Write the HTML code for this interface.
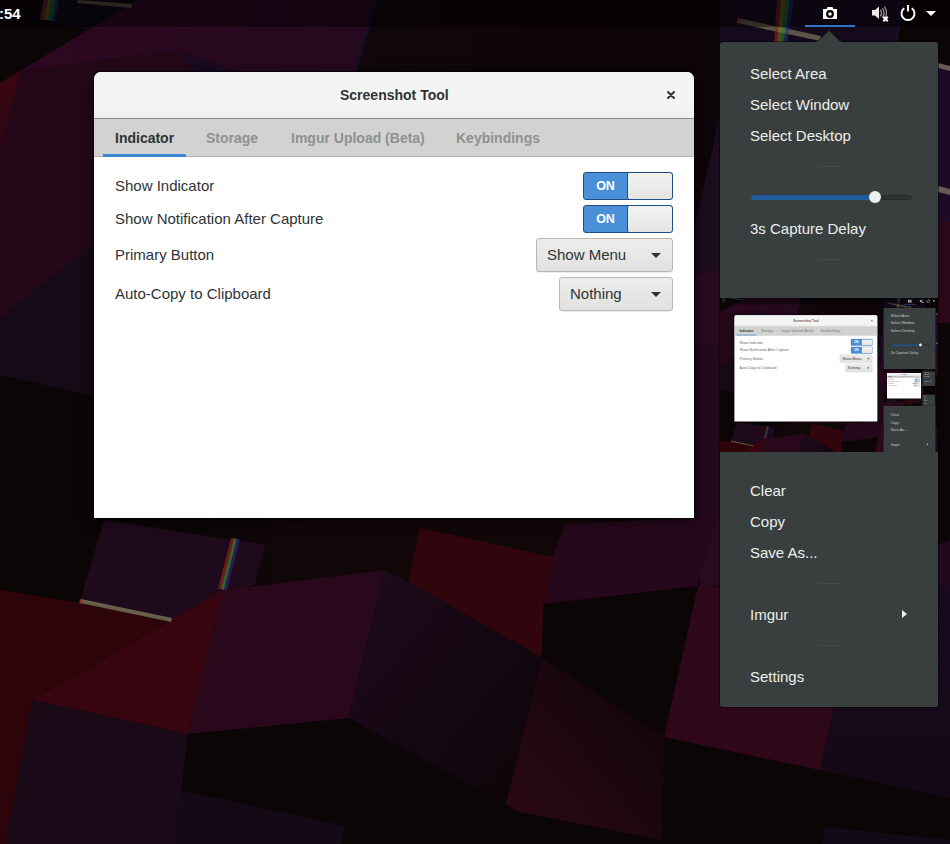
<!DOCTYPE html>
<html><head><meta charset="utf-8"><style>
*{box-sizing:border-box;margin:0;padding:0}
html,body{width:950px;height:844px;overflow:hidden;background:#0b0506}
body{position:relative;font-family:"Liberation Sans",sans-serif}
.scene{position:absolute;left:0;top:0;width:950px;height:844px;overflow:hidden}
.abs{position:absolute}
.t{position:absolute;white-space:nowrap;line-height:1}
.bgsvg{position:absolute;left:0;top:0}
.topbar{position:absolute;left:0;top:0;width:950px;height:27px;background:rgba(0,0,0,.45)}
.dlg{position:absolute;left:94px;top:72px;width:600px;height:446px;background:#fff;border-radius:7px 7px 0 0;overflow:hidden;box-shadow:0 0 0 1px rgba(0,0,0,.55),0 2px 14px rgba(0,0,0,.6)}
.hdr{position:absolute;left:0;top:0;width:600px;height:47px;background:linear-gradient(#f4f4f4 80%,#eeeeed);border-bottom:1px solid #8f8f8b}
.tabs{position:absolute;left:0;top:47px;width:600px;height:38px;background:#d2d2d0;border-bottom:1px solid #b0b0ac}
.tab{position:absolute;top:11px;font-size:14px;font-weight:bold;color:#8f9191}
.lbl{position:absolute;font-size:15px;color:#2e3436}
.sw{position:absolute;width:90px;height:28px;border:1px solid #1c4f88;border-radius:3px;background:#4a90d9;overflow:hidden}
.sw .on{position:absolute;left:0;top:0;width:43px;height:26px;color:#fff;font-size:12.5px;font-weight:bold;text-align:center;line-height:27px}
.sw .knob{position:absolute;left:43px;top:0;width:45px;height:26px;background:linear-gradient(#f3f3f2,#e4e4e3);border-left:1px solid #1c4f88;border-radius:2px}
.cb{position:absolute;height:34px;border:1px solid #b6b6b3;border-radius:3px;background:linear-gradient(#ededec,#e1e1df);box-shadow:0 1px rgba(0,0,0,.07)}
.cb .tx{position:absolute;left:10px;top:7px;font-size:15px;color:#2e3436}
.cb .ar{position:absolute;right:11px;top:14px;width:0;height:0;border-left:5px solid transparent;border-right:5px solid transparent;border-top:5px solid #2e3436}
.menu{position:absolute;left:720px;top:42px;width:218px;height:665px;background:#393f3f;border-radius:2.5px;box-shadow:0 0 0 1px rgba(0,0,0,.45)}
.marrow{position:absolute;left:816px;top:30px}
.mi{position:absolute;left:30px;font-size:15px;color:#eeeeec}
.sep{position:absolute;left:94px;width:34px;height:1px;background:linear-gradient(90deg,#393f3f,#434949 30%,#434949 70%,#393f3f)}
.thumb{position:absolute;left:720px;top:298px;width:218px;height:154px;overflow:hidden;background:#0b0506}
.thumb > .scene{transform-origin:0 0;transform:scale(0.2383);left:-8.4px;top:0}
.thumb .t{opacity:.75}
</style></head><body><div class="scene"><svg class="bgsvg" width="950" height="844" viewBox="0 0 950 844">
<defs>
<linearGradient id="gmid" x1="0" y1="0" x2="1" y2="1"><stop offset="0" stop-color="#1e0a1c"/><stop offset="1" stop-color="#0c0508"/></linearGradient>
<linearGradient id="gbig" x1="1" y1="0" x2="0" y2="1"><stop offset="0" stop-color="#0c0506"/><stop offset="1" stop-color="#2e0818"/></linearGradient>
<linearGradient id="gup" x1="0" y1="0" x2="1" y2="0"><stop offset="0" stop-color="#2e0720"/><stop offset="1" stop-color="#240a1e"/></linearGradient>
<linearGradient id="gred" x1="0" y1="0" x2="0" y2="1"><stop offset="0" stop-color="#3a0510"/><stop offset="1" stop-color="#260816"/></linearGradient>
<linearGradient id="gband" x1="0" y1="0" x2="1" y2="0"><stop offset="0" stop-color="#110709" stop-opacity="0"/><stop offset=".25" stop-color="#110709" stop-opacity="1"/></linearGradient>
<linearGradient id="grt" x1="0" y1="0" x2="0" y2="1"><stop offset="0" stop-color="#1a0a20"/><stop offset="1" stop-color="#140816"/></linearGradient>
<linearGradient id="gdk" x1="0" y1="0" x2="1" y2="0"><stop offset="0" stop-color="#10060c"/><stop offset=".7" stop-color="#0f0508"/><stop offset="1" stop-color="#0c050a"/></linearGradient>
</defs>
<rect width="950" height="844" fill="#0b0506"/>
<!-- top area -->
<polygon points="376,0 720,0 720,120 694,230 694,72 356,72" fill="url(#gdk)"/>
<polygon points="40,0 137,0 88,30 40,20" fill="#0d0a12"/>
<polygon points="138,0 376,0 356,72 237,72 182,50 20,71 0,83" fill="url(#gup)"/><line x1="376" y1="0" x2="356" y2="72" stroke="#0c1028" stroke-width="2"/>
<polygon points="20,71 182,50 237,72 94,72 94,242 23,300 0,318 0,162" fill="#240818"/>
<polygon points="0,83 20,71 0,162" fill="url(#gred)"/><polygon points="182,50 237,72 193,72" fill="#1c0a20"/>
<polygon points="0,318 94,242 94,396 0,375" fill="#170a17"/>
<!-- right top -->
<polygon points="720,0 904,0 896,42 720,42" fill="#140a1c"/><line x1="904" y1="0" x2="896" y2="42" stroke="#101a30" stroke-width="1.5"/>
<polygon points="719,119 720,42 720,270 695,275 695,225" fill="#1a0c1c"/>
<polygon points="695,275 720,270 720,586 697,586 695,518" fill="#2a0a1e"/>
<polygon points="695,344 720,344 720,518 695,518" fill="#22091a"/>
<polygon points="938,65 950,65 950,222 938,222" fill="#1e0a26"/>
<polygon points="938,222 950,222 950,323 938,323" fill="#2a0818"/>
<!-- bottom -->
<polygon points="200,518 700,518 700,600 200,600" fill="url(#gband)"/>
<polygon points="104,520 265,545 255,584 171,620 80,601" fill="#1e0a1a"/>
<polygon points="0,590 80,603 171,622 223,590 33,700 5,844 0,844" fill="#2c040a"/>
<polygon points="223,590 188,734 33,700" fill="#36050f"/>
<polygon points="223,590 384,570 349,718 188,734" fill="#29081b"/>
<polygon points="33,700 188,734 175,844 5,844" fill="#1a0a18"/>
<polygon points="180,790 345,826 341,844 175,844" fill="#140a16"/>
<polygon points="420,528 553,557 541,657 408,582" fill="#30050e"/>
<polygon points="565,524 694,518 720,512 697,586 545,604 553,557" fill="#25081b"/>
<polygon points="384,570 408,582 541,657 506,804 349,718" fill="url(#gmid)"/>
<polygon points="543,604 698,586 664,737 542,658" fill="#0c0506"/>
<polygon points="542,658 664,737 662,840 520,812 506,804" fill="url(#gbig)"/>
<polygon points="698,586 720,587 834,707 820,770 664,737" fill="#2e0818"/>
<polygon points="834,707 938,707 938,545 950,540 950,798 820,770" fill="url(#grt)"/><polygon points="938,545 950,540 950,585 938,585" fill="#22081c"/><polygon points="824,827 950,840 950,844 823,844" fill="#120a16"/>
<!-- prism beams -->
<polygon points="81,599 172,618 171,622 80,603" fill="#a09870" opacity=".6"/>
<polygon points="80,599 84,600 83,604 79,603" fill="#c03030" opacity=".5"/>
<polygon points="231,538 234,538 221,589 218,589" fill="#b02020" opacity=".6"/>
<polygon points="234,538 237,539 224,590 221,589" fill="#40a030" opacity=".6"/>
<polygon points="237,539 240,539 227,590 224,590" fill="#3030a0" opacity=".5"/>
<polygon points="44,0 48,0 44,20 40,19" fill="#902828" opacity=".6"/>
<polygon points="48,0 52,0 48,20 44,20" fill="#808020" opacity=".55"/>
<polygon points="52,0 56,0 52,21 48,20" fill="#208040" opacity=".55"/>
<polygon points="56,0 59,0 55,21 52,21" fill="#203080" opacity=".55"/>
<polygon points="78,0 132,4 131,8 77,3" fill="#8a8060" opacity=".5"/>
<polygon points="738,18 821,36 820,41 737,23" fill="#6e6850" opacity=".8"/><polygon points="738,18 742,19 741,24 737,23" fill="#902020" opacity=".6"/>
<polygon points="777,0 781,0 777,42 774,42" fill="#902020" opacity=".6"/>
<polygon points="781,0 786,0 781,42 777,42" fill="#808020" opacity=".55"/>
<polygon points="786,0 790,0 784,42 781,42" fill="#208a40" opacity=".55"/>
<polygon points="790,0 794,0 787,42 784,42" fill="#20308a" opacity=".55"/>
<polygon points="938,63 950,66 950,71 938,68" fill="#9a9078" opacity=".6"/>
<polygon points="938,186 950,189 950,195 938,192" fill="#9a9078" opacity=".6"/>
</svg>
<div class="topbar"></div><div class="t" style="left:-1px;top:6px;font-size:15px;font-weight:bold;color:#fff">:54</div><svg class="abs" style="left:820px;top:4px" width="20" height="18" viewBox="0 0 20 18"><path d="M3 6h3.5l1-2.5h5l1 2.5h3.5v10h-14z" fill="#000" opacity=".5"/><path d="M3 5h3.5l1-2h5l1 2h3.5v10h-14z" fill="#fff"/><circle cx="10" cy="10" r="3.9" fill="#000"/><circle cx="10" cy="10" r="1.8" fill="#fff"/></svg><div class="abs" style="left:805px;top:25px;width:50px;height:2px;background:#3474c4"></div><svg class="abs" style="left:870px;top:4px" width="20" height="18" viewBox="0 0 20 18"><path d="M2 6h3l4-3.5v12.5l-4-3.5h-3z" fill="#e8e8e8"/><path d="M10.5 5.5q2 3.5 0 7M12.5 4q3 5 0 10M14.5 2.5q4 6.5 0 13" stroke="#8a8a8a" stroke-width="1.4" fill="none"/><path d="M13.3 12.8l4.4 4.4M17.7 12.8l-4.4 4.4" stroke="#fff" stroke-width="2.2"/></svg><svg class="abs" style="left:899px;top:4px" width="18" height="18" viewBox="0 0 18 18"><path d="M5.27 4.18A6.5 6.5 0 1 0 12.73 4.18" stroke="#fff" stroke-width="1.9" fill="none"/><path d="M9 1v6.5" stroke="#fff" stroke-width="1.9"/></svg><div class="abs" style="left:926px;top:11px;width:0;height:0;border-left:5px solid transparent;border-right:5px solid transparent;border-top:5px solid #fff"></div><div class="dlg">
  <div class="hdr">
    <div class="t" style="left:246px;top:16px;font-size:14px;font-weight:bold;color:#2e3436">Screenshot Tool</div>
    <svg class="abs" style="left:572px;top:18px" width="10" height="10" viewBox="0 0 10 10"><path d="M2 2L8 8M8 2L2 8" stroke="#2e3436" stroke-width="2" stroke-linecap="round"/></svg>
  </div>
  <div class="tabs">
    <div class="tab" style="left:21px;color:#2e3436">Indicator</div>
    <div class="tab" style="left:112px">Storage</div>
    <div class="tab" style="left:197px">Imgur Upload (Beta)</div>
    <div class="tab" style="left:362px">Keybindings</div>
    <div class="abs" style="left:9px;top:35px;width:83px;height:3px;background:#3f88d8"></div>
  </div>
  <div class="lbl t" style="left:21px;top:106px">Show Indicator</div>
  <div class="lbl t" style="left:21px;top:139px">Show Notification After Capture</div>
  <div class="lbl t" style="left:21px;top:175px">Primary Button</div>
  <div class="lbl t" style="left:21px;top:214px">Auto-Copy to Clipboard</div>
  <div class="sw" style="left:489px;top:100px"><div class="on">ON</div><div class="knob"></div></div>
  <div class="sw" style="left:489px;top:133px"><div class="on">ON</div><div class="knob"></div></div>
  <div class="cb" style="left:442px;top:166px;width:137px"><div class="tx">Show Menu</div><div class="ar"></div></div>
  <div class="cb" style="left:465px;top:205px;width:114px"><div class="tx">Nothing</div><div class="ar"></div></div>
</div><div class="menu">
  <div class="mi t" style="top:24px">Select Area</div>
  <div class="mi t" style="top:55px">Select Window</div>
  <div class="mi t" style="top:86px">Select Desktop</div>
  <div class="sep" style="top:124px"></div>
  <div class="abs" style="left:31px;top:153px;width:161px;height:5px;border-radius:3px;background:#2e3232;border:1px solid #262a2a"></div>
  <div class="abs" style="left:31px;top:153px;width:125px;height:5px;border-radius:3px;background:#215d9c"></div>
  <div class="abs" style="left:149px;top:149px;width:12px;height:12px;border-radius:6px;background:#eeeeec"></div>
  <div class="mi t" style="top:179px">3s Capture Delay</div>
  <div class="sep" style="top:217px"></div>
  <div class="mi t" style="top:441px">Clear</div>
  <div class="mi t" style="top:472px">Copy</div>
  <div class="mi t" style="top:503px">Save As...</div>
  <div class="sep" style="top:541px"></div>
  <div class="mi t" style="top:565px">Imgur</div>
  <div class="abs" style="left:182px;top:568px;width:0;height:0;border-top:4.5px solid transparent;border-bottom:4.5px solid transparent;border-left:5px solid #eeeeec"></div>
  <div class="sep" style="top:603px"></div>
  <div class="mi t" style="top:627px">Settings</div>
</div><svg class="marrow" width="26" height="14" viewBox="0 0 26 14"><path d="M0.5 12.5L13 0.3L25.5 12.5" fill="#393f3f" stroke="rgba(0,0,0,.5)" stroke-width="1"/><rect x="0" y="11.5" width="26" height="3" fill="#393f3f"/></svg><div class="thumb"><div class="scene"><svg class="bgsvg" width="950" height="844" viewBox="0 0 950 844">
<defs>
<linearGradient id="gmid" x1="0" y1="0" x2="1" y2="1"><stop offset="0" stop-color="#1e0a1c"/><stop offset="1" stop-color="#0c0508"/></linearGradient>
<linearGradient id="gbig" x1="1" y1="0" x2="0" y2="1"><stop offset="0" stop-color="#0c0506"/><stop offset="1" stop-color="#2e0818"/></linearGradient>
<linearGradient id="gup" x1="0" y1="0" x2="1" y2="0"><stop offset="0" stop-color="#2e0720"/><stop offset="1" stop-color="#240a1e"/></linearGradient>
<linearGradient id="gred" x1="0" y1="0" x2="0" y2="1"><stop offset="0" stop-color="#3a0510"/><stop offset="1" stop-color="#260816"/></linearGradient>
<linearGradient id="gband" x1="0" y1="0" x2="1" y2="0"><stop offset="0" stop-color="#110709" stop-opacity="0"/><stop offset=".25" stop-color="#110709" stop-opacity="1"/></linearGradient>
<linearGradient id="grt" x1="0" y1="0" x2="0" y2="1"><stop offset="0" stop-color="#1a0a20"/><stop offset="1" stop-color="#140816"/></linearGradient>
<linearGradient id="gdk" x1="0" y1="0" x2="1" y2="0"><stop offset="0" stop-color="#10060c"/><stop offset=".7" stop-color="#0f0508"/><stop offset="1" stop-color="#0c050a"/></linearGradient>
</defs>
<rect width="950" height="844" fill="#0b0506"/>
<!-- top area -->
<polygon points="376,0 720,0 720,120 694,230 694,72 356,72" fill="url(#gdk)"/>
<polygon points="40,0 137,0 88,30 40,20" fill="#0d0a12"/>
<polygon points="138,0 376,0 356,72 237,72 182,50 20,71 0,83" fill="url(#gup)"/><line x1="376" y1="0" x2="356" y2="72" stroke="#0c1028" stroke-width="2"/>
<polygon points="20,71 182,50 237,72 94,72 94,242 23,300 0,318 0,162" fill="#240818"/>
<polygon points="0,83 20,71 0,162" fill="url(#gred)"/><polygon points="182,50 237,72 193,72" fill="#1c0a20"/>
<polygon points="0,318 94,242 94,396 0,375" fill="#170a17"/>
<!-- right top -->
<polygon points="720,0 904,0 896,42 720,42" fill="#140a1c"/><line x1="904" y1="0" x2="896" y2="42" stroke="#101a30" stroke-width="1.5"/>
<polygon points="719,119 720,42 720,270 695,275 695,225" fill="#1a0c1c"/>
<polygon points="695,275 720,270 720,586 697,586 695,518" fill="#2a0a1e"/>
<polygon points="695,344 720,344 720,518 695,518" fill="#22091a"/>
<polygon points="938,65 950,65 950,222 938,222" fill="#1e0a26"/>
<polygon points="938,222 950,222 950,323 938,323" fill="#2a0818"/>
<!-- bottom -->
<polygon points="200,518 700,518 700,600 200,600" fill="url(#gband)"/>
<polygon points="104,520 265,545 255,584 171,620 80,601" fill="#1e0a1a"/>
<polygon points="0,590 80,603 171,622 223,590 33,700 5,844 0,844" fill="#2c040a"/>
<polygon points="223,590 188,734 33,700" fill="#36050f"/>
<polygon points="223,590 384,570 349,718 188,734" fill="#29081b"/>
<polygon points="33,700 188,734 175,844 5,844" fill="#1a0a18"/>
<polygon points="180,790 345,826 341,844 175,844" fill="#140a16"/>
<polygon points="420,528 553,557 541,657 408,582" fill="#30050e"/>
<polygon points="565,524 694,518 720,512 697,586 545,604 553,557" fill="#25081b"/>
<polygon points="384,570 408,582 541,657 506,804 349,718" fill="url(#gmid)"/>
<polygon points="543,604 698,586 664,737 542,658" fill="#0c0506"/>
<polygon points="542,658 664,737 662,840 520,812 506,804" fill="url(#gbig)"/>
<polygon points="698,586 720,587 834,707 820,770 664,737" fill="#2e0818"/>
<polygon points="834,707 938,707 938,545 950,540 950,798 820,770" fill="url(#grt)"/><polygon points="938,545 950,540 950,585 938,585" fill="#22081c"/><polygon points="824,827 950,840 950,844 823,844" fill="#120a16"/>
<!-- prism beams -->
<polygon points="81,599 172,618 171,622 80,603" fill="#a09870" opacity=".6"/>
<polygon points="80,599 84,600 83,604 79,603" fill="#c03030" opacity=".5"/>
<polygon points="231,538 234,538 221,589 218,589" fill="#b02020" opacity=".6"/>
<polygon points="234,538 237,539 224,590 221,589" fill="#40a030" opacity=".6"/>
<polygon points="237,539 240,539 227,590 224,590" fill="#3030a0" opacity=".5"/>
<polygon points="44,0 48,0 44,20 40,19" fill="#902828" opacity=".6"/>
<polygon points="48,0 52,0 48,20 44,20" fill="#808020" opacity=".55"/>
<polygon points="52,0 56,0 52,21 48,20" fill="#208040" opacity=".55"/>
<polygon points="56,0 59,0 55,21 52,21" fill="#203080" opacity=".55"/>
<polygon points="78,0 132,4 131,8 77,3" fill="#8a8060" opacity=".5"/>
<polygon points="738,18 821,36 820,41 737,23" fill="#6e6850" opacity=".8"/><polygon points="738,18 742,19 741,24 737,23" fill="#902020" opacity=".6"/>
<polygon points="777,0 781,0 777,42 774,42" fill="#902020" opacity=".6"/>
<polygon points="781,0 786,0 781,42 777,42" fill="#808020" opacity=".55"/>
<polygon points="786,0 790,0 784,42 781,42" fill="#208a40" opacity=".55"/>
<polygon points="790,0 794,0 787,42 784,42" fill="#20308a" opacity=".55"/>
<polygon points="938,63 950,66 950,71 938,68" fill="#9a9078" opacity=".6"/>
<polygon points="938,186 950,189 950,195 938,192" fill="#9a9078" opacity=".6"/>
</svg>
<div class="topbar"></div><div class="t" style="left:-1px;top:6px;font-size:15px;font-weight:bold;color:#fff">:54</div><svg class="abs" style="left:820px;top:4px" width="20" height="18" viewBox="0 0 20 18"><path d="M3 6h3.5l1-2.5h5l1 2.5h3.5v10h-14z" fill="#000" opacity=".5"/><path d="M3 5h3.5l1-2h5l1 2h3.5v10h-14z" fill="#fff"/><circle cx="10" cy="10" r="3.9" fill="#000"/><circle cx="10" cy="10" r="1.8" fill="#fff"/></svg><div class="abs" style="left:805px;top:25px;width:50px;height:2px;background:#3474c4"></div><svg class="abs" style="left:870px;top:4px" width="20" height="18" viewBox="0 0 20 18"><path d="M2 6h3l4-3.5v12.5l-4-3.5h-3z" fill="#e8e8e8"/><path d="M10.5 5.5q2 3.5 0 7M12.5 4q3 5 0 10M14.5 2.5q4 6.5 0 13" stroke="#8a8a8a" stroke-width="1.4" fill="none"/><path d="M13.3 12.8l4.4 4.4M17.7 12.8l-4.4 4.4" stroke="#fff" stroke-width="2.2"/></svg><svg class="abs" style="left:899px;top:4px" width="18" height="18" viewBox="0 0 18 18"><path d="M5.27 4.18A6.5 6.5 0 1 0 12.73 4.18" stroke="#fff" stroke-width="1.9" fill="none"/><path d="M9 1v6.5" stroke="#fff" stroke-width="1.9"/></svg><div class="abs" style="left:926px;top:11px;width:0;height:0;border-left:5px solid transparent;border-right:5px solid transparent;border-top:5px solid #fff"></div><div class="dlg">
  <div class="hdr">
    <div class="t" style="left:246px;top:16px;font-size:14px;font-weight:bold;color:#2e3436">Screenshot Tool</div>
    <svg class="abs" style="left:572px;top:18px" width="10" height="10" viewBox="0 0 10 10"><path d="M2 2L8 8M8 2L2 8" stroke="#2e3436" stroke-width="2" stroke-linecap="round"/></svg>
  </div>
  <div class="tabs">
    <div class="tab" style="left:21px;color:#2e3436">Indicator</div>
    <div class="tab" style="left:112px">Storage</div>
    <div class="tab" style="left:197px">Imgur Upload (Beta)</div>
    <div class="tab" style="left:362px">Keybindings</div>
    <div class="abs" style="left:9px;top:35px;width:83px;height:3px;background:#3f88d8"></div>
  </div>
  <div class="lbl t" style="left:21px;top:106px">Show Indicator</div>
  <div class="lbl t" style="left:21px;top:139px">Show Notification After Capture</div>
  <div class="lbl t" style="left:21px;top:175px">Primary Button</div>
  <div class="lbl t" style="left:21px;top:214px">Auto-Copy to Clipboard</div>
  <div class="sw" style="left:489px;top:100px"><div class="on">ON</div><div class="knob"></div></div>
  <div class="sw" style="left:489px;top:133px"><div class="on">ON</div><div class="knob"></div></div>
  <div class="cb" style="left:442px;top:166px;width:137px"><div class="tx">Show Menu</div><div class="ar"></div></div>
  <div class="cb" style="left:465px;top:205px;width:114px"><div class="tx">Nothing</div><div class="ar"></div></div>
</div><div class="menu">
  <div class="mi t" style="top:24px">Select Area</div>
  <div class="mi t" style="top:55px">Select Window</div>
  <div class="mi t" style="top:86px">Select Desktop</div>
  <div class="sep" style="top:124px"></div>
  <div class="abs" style="left:31px;top:153px;width:161px;height:5px;border-radius:3px;background:#2e3232;border:1px solid #262a2a"></div>
  <div class="abs" style="left:31px;top:153px;width:125px;height:5px;border-radius:3px;background:#215d9c"></div>
  <div class="abs" style="left:149px;top:149px;width:12px;height:12px;border-radius:6px;background:#eeeeec"></div>
  <div class="mi t" style="top:179px">3s Capture Delay</div>
  <div class="sep" style="top:217px"></div>
  <div class="mi t" style="top:441px">Clear</div>
  <div class="mi t" style="top:472px">Copy</div>
  <div class="mi t" style="top:503px">Save As...</div>
  <div class="sep" style="top:541px"></div>
  <div class="mi t" style="top:565px">Imgur</div>
  <div class="abs" style="left:182px;top:568px;width:0;height:0;border-top:4.5px solid transparent;border-bottom:4.5px solid transparent;border-left:5px solid #eeeeec"></div>
  <div class="sep" style="top:603px"></div>
  <div class="mi t" style="top:627px">Settings</div>
</div><svg class="marrow" width="26" height="14" viewBox="0 0 26 14"><path d="M0.5 12.5L13 0.3L25.5 12.5" fill="#393f3f" stroke="rgba(0,0,0,.5)" stroke-width="1"/><rect x="0" y="11.5" width="26" height="3" fill="#393f3f"/></svg><div class="thumb"><div class="scene"><svg class="bgsvg" width="950" height="844" viewBox="0 0 950 844">
<defs>
<linearGradient id="gmid" x1="0" y1="0" x2="1" y2="1"><stop offset="0" stop-color="#1e0a1c"/><stop offset="1" stop-color="#0c0508"/></linearGradient>
<linearGradient id="gbig" x1="1" y1="0" x2="0" y2="1"><stop offset="0" stop-color="#0c0506"/><stop offset="1" stop-color="#2e0818"/></linearGradient>
<linearGradient id="gup" x1="0" y1="0" x2="1" y2="0"><stop offset="0" stop-color="#2e0720"/><stop offset="1" stop-color="#240a1e"/></linearGradient>
<linearGradient id="gred" x1="0" y1="0" x2="0" y2="1"><stop offset="0" stop-color="#3a0510"/><stop offset="1" stop-color="#260816"/></linearGradient>
<linearGradient id="gband" x1="0" y1="0" x2="1" y2="0"><stop offset="0" stop-color="#110709" stop-opacity="0"/><stop offset=".25" stop-color="#110709" stop-opacity="1"/></linearGradient>
<linearGradient id="grt" x1="0" y1="0" x2="0" y2="1"><stop offset="0" stop-color="#1a0a20"/><stop offset="1" stop-color="#140816"/></linearGradient>
<linearGradient id="gdk" x1="0" y1="0" x2="1" y2="0"><stop offset="0" stop-color="#10060c"/><stop offset=".7" stop-color="#0f0508"/><stop offset="1" stop-color="#0c050a"/></linearGradient>
</defs>
<rect width="950" height="844" fill="#0b0506"/>
<!-- top area -->
<polygon points="376,0 720,0 720,120 694,230 694,72 356,72" fill="url(#gdk)"/>
<polygon points="40,0 137,0 88,30 40,20" fill="#0d0a12"/>
<polygon points="138,0 376,0 356,72 237,72 182,50 20,71 0,83" fill="url(#gup)"/><line x1="376" y1="0" x2="356" y2="72" stroke="#0c1028" stroke-width="2"/>
<polygon points="20,71 182,50 237,72 94,72 94,242 23,300 0,318 0,162" fill="#240818"/>
<polygon points="0,83 20,71 0,162" fill="url(#gred)"/><polygon points="182,50 237,72 193,72" fill="#1c0a20"/>
<polygon points="0,318 94,242 94,396 0,375" fill="#170a17"/>
<!-- right top -->
<polygon points="720,0 904,0 896,42 720,42" fill="#140a1c"/><line x1="904" y1="0" x2="896" y2="42" stroke="#101a30" stroke-width="1.5"/>
<polygon points="719,119 720,42 720,270 695,275 695,225" fill="#1a0c1c"/>
<polygon points="695,275 720,270 720,586 697,586 695,518" fill="#2a0a1e"/>
<polygon points="695,344 720,344 720,518 695,518" fill="#22091a"/>
<polygon points="938,65 950,65 950,222 938,222" fill="#1e0a26"/>
<polygon points="938,222 950,222 950,323 938,323" fill="#2a0818"/>
<!-- bottom -->
<polygon points="200,518 700,518 700,600 200,600" fill="url(#gband)"/>
<polygon points="104,520 265,545 255,584 171,620 80,601" fill="#1e0a1a"/>
<polygon points="0,590 80,603 171,622 223,590 33,700 5,844 0,844" fill="#2c040a"/>
<polygon points="223,590 188,734 33,700" fill="#36050f"/>
<polygon points="223,590 384,570 349,718 188,734" fill="#29081b"/>
<polygon points="33,700 188,734 175,844 5,844" fill="#1a0a18"/>
<polygon points="180,790 345,826 341,844 175,844" fill="#140a16"/>
<polygon points="420,528 553,557 541,657 408,582" fill="#30050e"/>
<polygon points="565,524 694,518 720,512 697,586 545,604 553,557" fill="#25081b"/>
<polygon points="384,570 408,582 541,657 506,804 349,718" fill="url(#gmid)"/>
<polygon points="543,604 698,586 664,737 542,658" fill="#0c0506"/>
<polygon points="542,658 664,737 662,840 520,812 506,804" fill="url(#gbig)"/>
<polygon points="698,586 720,587 834,707 820,770 664,737" fill="#2e0818"/>
<polygon points="834,707 938,707 938,545 950,540 950,798 820,770" fill="url(#grt)"/><polygon points="938,545 950,540 950,585 938,585" fill="#22081c"/><polygon points="824,827 950,840 950,844 823,844" fill="#120a16"/>
<!-- prism beams -->
<polygon points="81,599 172,618 171,622 80,603" fill="#a09870" opacity=".6"/>
<polygon points="80,599 84,600 83,604 79,603" fill="#c03030" opacity=".5"/>
<polygon points="231,538 234,538 221,589 218,589" fill="#b02020" opacity=".6"/>
<polygon points="234,538 237,539 224,590 221,589" fill="#40a030" opacity=".6"/>
<polygon points="237,539 240,539 227,590 224,590" fill="#3030a0" opacity=".5"/>
<polygon points="44,0 48,0 44,20 40,19" fill="#902828" opacity=".6"/>
<polygon points="48,0 52,0 48,20 44,20" fill="#808020" opacity=".55"/>
<polygon points="52,0 56,0 52,21 48,20" fill="#208040" opacity=".55"/>
<polygon points="56,0 59,0 55,21 52,21" fill="#203080" opacity=".55"/>
<polygon points="78,0 132,4 131,8 77,3" fill="#8a8060" opacity=".5"/>
<polygon points="738,18 821,36 820,41 737,23" fill="#6e6850" opacity=".8"/><polygon points="738,18 742,19 741,24 737,23" fill="#902020" opacity=".6"/>
<polygon points="777,0 781,0 777,42 774,42" fill="#902020" opacity=".6"/>
<polygon points="781,0 786,0 781,42 777,42" fill="#808020" opacity=".55"/>
<polygon points="786,0 790,0 784,42 781,42" fill="#208a40" opacity=".55"/>
<polygon points="790,0 794,0 787,42 784,42" fill="#20308a" opacity=".55"/>
<polygon points="938,63 950,66 950,71 938,68" fill="#9a9078" opacity=".6"/>
<polygon points="938,186 950,189 950,195 938,192" fill="#9a9078" opacity=".6"/>
</svg>
<div class="topbar"></div><div class="t" style="left:-1px;top:6px;font-size:15px;font-weight:bold;color:#fff">:54</div><svg class="abs" style="left:820px;top:4px" width="20" height="18" viewBox="0 0 20 18"><path d="M3 6h3.5l1-2.5h5l1 2.5h3.5v10h-14z" fill="#000" opacity=".5"/><path d="M3 5h3.5l1-2h5l1 2h3.5v10h-14z" fill="#fff"/><circle cx="10" cy="10" r="3.9" fill="#000"/><circle cx="10" cy="10" r="1.8" fill="#fff"/></svg><div class="abs" style="left:805px;top:25px;width:50px;height:2px;background:#3474c4"></div><svg class="abs" style="left:870px;top:4px" width="20" height="18" viewBox="0 0 20 18"><path d="M2 6h3l4-3.5v12.5l-4-3.5h-3z" fill="#e8e8e8"/><path d="M10.5 5.5q2 3.5 0 7M12.5 4q3 5 0 10M14.5 2.5q4 6.5 0 13" stroke="#8a8a8a" stroke-width="1.4" fill="none"/><path d="M13.3 12.8l4.4 4.4M17.7 12.8l-4.4 4.4" stroke="#fff" stroke-width="2.2"/></svg><svg class="abs" style="left:899px;top:4px" width="18" height="18" viewBox="0 0 18 18"><path d="M5.27 4.18A6.5 6.5 0 1 0 12.73 4.18" stroke="#fff" stroke-width="1.9" fill="none"/><path d="M9 1v6.5" stroke="#fff" stroke-width="1.9"/></svg><div class="abs" style="left:926px;top:11px;width:0;height:0;border-left:5px solid transparent;border-right:5px solid transparent;border-top:5px solid #fff"></div><div class="dlg">
  <div class="hdr">
    <div class="t" style="left:246px;top:16px;font-size:14px;font-weight:bold;color:#2e3436">Screenshot Tool</div>
    <svg class="abs" style="left:572px;top:18px" width="10" height="10" viewBox="0 0 10 10"><path d="M2 2L8 8M8 2L2 8" stroke="#2e3436" stroke-width="2" stroke-linecap="round"/></svg>
  </div>
  <div class="tabs">
    <div class="tab" style="left:21px;color:#2e3436">Indicator</div>
    <div class="tab" style="left:112px">Storage</div>
    <div class="tab" style="left:197px">Imgur Upload (Beta)</div>
    <div class="tab" style="left:362px">Keybindings</div>
    <div class="abs" style="left:9px;top:35px;width:83px;height:3px;background:#3f88d8"></div>
  </div>
  <div class="lbl t" style="left:21px;top:106px">Show Indicator</div>
  <div class="lbl t" style="left:21px;top:139px">Show Notification After Capture</div>
  <div class="lbl t" style="left:21px;top:175px">Primary Button</div>
  <div class="lbl t" style="left:21px;top:214px">Auto-Copy to Clipboard</div>
  <div class="sw" style="left:489px;top:100px"><div class="on">ON</div><div class="knob"></div></div>
  <div class="sw" style="left:489px;top:133px"><div class="on">ON</div><div class="knob"></div></div>
  <div class="cb" style="left:442px;top:166px;width:137px"><div class="tx">Show Menu</div><div class="ar"></div></div>
  <div class="cb" style="left:465px;top:205px;width:114px"><div class="tx">Nothing</div><div class="ar"></div></div>
</div><div class="menu">
  <div class="mi t" style="top:24px">Select Area</div>
  <div class="mi t" style="top:55px">Select Window</div>
  <div class="mi t" style="top:86px">Select Desktop</div>
  <div class="sep" style="top:124px"></div>
  <div class="abs" style="left:31px;top:153px;width:161px;height:5px;border-radius:3px;background:#2e3232;border:1px solid #262a2a"></div>
  <div class="abs" style="left:31px;top:153px;width:125px;height:5px;border-radius:3px;background:#215d9c"></div>
  <div class="abs" style="left:149px;top:149px;width:12px;height:12px;border-radius:6px;background:#eeeeec"></div>
  <div class="mi t" style="top:179px">3s Capture Delay</div>
  <div class="sep" style="top:217px"></div>
  <div class="mi t" style="top:441px">Clear</div>
  <div class="mi t" style="top:472px">Copy</div>
  <div class="mi t" style="top:503px">Save As...</div>
  <div class="sep" style="top:541px"></div>
  <div class="mi t" style="top:565px">Imgur</div>
  <div class="abs" style="left:182px;top:568px;width:0;height:0;border-top:4.5px solid transparent;border-bottom:4.5px solid transparent;border-left:5px solid #eeeeec"></div>
  <div class="sep" style="top:603px"></div>
  <div class="mi t" style="top:627px">Settings</div>
</div><svg class="marrow" width="26" height="14" viewBox="0 0 26 14"><path d="M0.5 12.5L13 0.3L25.5 12.5" fill="#393f3f" stroke="rgba(0,0,0,.5)" stroke-width="1"/><rect x="0" y="11.5" width="26" height="3" fill="#393f3f"/></svg><div class="thumb"></div></div></div></div></div></div></body></html>
